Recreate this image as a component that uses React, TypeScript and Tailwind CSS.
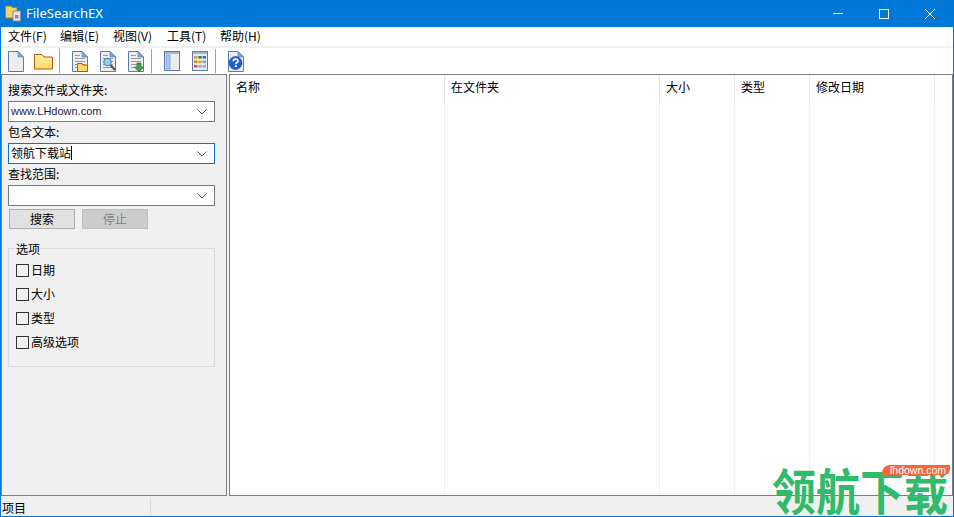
const menus = [
  { title: "文件(F)", width: "w-[39px]" },
  { title: "编辑(E)", width: "w-[40px]" },
  { title: "视图(V)", width: "w-[41px]" },
  { title: "工具(T)", width: "w-[40px]" },
  { title: "帮助(H)", width: "w-[40px]" },
];
const columns = [
  { title: "名称", width: "w-[215px]" },
  { title: "在文件夹", width: "w-[215px]" },
  { title: "大小", width: "w-[75px]" },
  { title: "类型", width: "w-[75px]" },
  { title: "修改日期", width: "w-[125px]" },
];
const options = ["日期", "大小", "类型", "高级选项"];

function DocBase({ lines = true }: { lines?: boolean }) {
  return (
    <>
      <path d="M0.5 0.5H10L15.5 6V20.5H0.5Z" fill="#ececec" stroke="#5a7cae" />
      <path d="M10 0.5V6H15.5Z" fill="#7fa6d8" stroke="#5a7cae" strokeWidth="0.6" />
      {lines && (
        <path d="M3 4.5H8M3 7.5H13M3 10.5H13M3 13.5H13M3 16.5H13" stroke="#9a9a9a" />
      )}
    </>
  );
}

function NewIcon() {
  return (
    <svg width="16" height="21" viewBox="0 0 16 21">
      <DocBase lines={false} />
    </svg>
  );
}

function FolderIcon() {
  return (
    <svg width="19" height="17" viewBox="0 0 19 17">
      <defs>
        <linearGradient id="fold" x1="0" y1="0" x2="0" y2="1">
          <stop offset="0" stopColor="#fff2a8" />
          <stop offset="1" stopColor="#fdd868" />
        </linearGradient>
      </defs>
      <path d="M0.5 16V1.5H8L10 4H18.5V16Z" fill="url(#fold)" stroke="#b8560c" />
    </svg>
  );
}

function OpenDocIcon() {
  return (
    <svg width="16" height="21" viewBox="0 0 16 21" className="overflow-visible">
      <DocBase />
      <path d="M5.5 20.5V12.5H10L11 14H15.5V20.5Z" fill="#fdd868" stroke="#b8560c" />
    </svg>
  );
}

function FindDocIcon() {
  return (
    <svg width="16" height="21" viewBox="0 0 16 21" className="overflow-visible">
      <DocBase />
      <path d="M10.5 14L15 19" stroke="#555" strokeWidth="2" />
      <circle cx="7.5" cy="11" r="3.8" fill="#8fd0f2" stroke="#4a7fb0" />
    </svg>
  );
}

function SaveDocIcon() {
  return (
    <svg width="16" height="21" viewBox="0 0 16 21" className="overflow-visible">
      <DocBase />
      <path d="M9 12H13V16H15.5L11 21L6.5 16H9Z" fill="#3fa34d" stroke="#22702e" strokeWidth="0.7" />
    </svg>
  );
}

function PaneIcon() {
  return (
    <svg width="16" height="20" viewBox="0 0 16 20">
      <rect x="0.5" y="0.5" width="15" height="19" fill="#ececec" stroke="#5a7cae" />
      <rect x="1" y="1" width="14" height="2" fill="#9db7d8" />
      <rect x="2" y="4" width="4" height="14" fill="#a9c8ec" stroke="#5a8cc8" strokeWidth="0.6" />
    </svg>
  );
}

function GridIcon() {
  const cells = [
    "#d8a23a", "#2f8f5b", "#3a6fc0",
    "#e0803a", "#d8b02a", "#8c9cc8",
    "#e0522a", "#9aa8cc", "#9aa8cc",
  ];
  return (
    <svg width="16" height="20" viewBox="0 0 16 20">
      <rect x="0.5" y="0.5" width="15" height="19" fill="#ececec" stroke="#5a7cae" />
      <rect x="1" y="1" width="14" height="2" fill="#9db7d8" />
      {cells.map((c, i) => (
        <rect key={i} x={2 + (i % 3) * 4.3} y={5 + Math.floor(i / 3) * 4.5} width="3.4" height="2.6" fill={c} />
      ))}
    </svg>
  );
}

function HelpIcon() {
  return (
    <svg width="16" height="21" viewBox="0 0 16 21">
      <DocBase lines={false} />
      <circle cx="7.5" cy="12" r="6.5" fill="#1f5fd0" stroke="#173f90" strokeWidth="0.6" />
      <path d="M5.3 10.2C5.3 8.7 6.4 8 7.6 8C9 8 10 8.8 10 10C10 11.5 7.8 11.6 7.8 13.2" fill="none" stroke="#fff" strokeWidth="1.7" />
      <rect x="6.9" y="14.2" width="1.9" height="1.9" fill="#fff" />
    </svg>
  );
}

function Sep() {
  return <div className="w-px h-6 bg-[#a0a0a0]" />;
}

function Combo({ value, focused, latin }: { value?: string; focused?: boolean; latin?: boolean }) {
  return (
    <div
      className={`h-[21px] w-[207px] ml-[3px] flex items-center justify-between bg-white border pl-[2px] pr-[7px] ${
        focused ? "border-[#0078d7]" : "border-[#7a7a7a]"
      }`}
    >
      {latin ? (
        <span className="pb-px text-[11px] text-[#1a1a4a]" style={{ fontFamily: '"Liberation Sans", sans-serif' }}>
          {value}
        </span>
      ) : (
        <span className="pb-px flex items-center text-[12px] text-black">
          {value}
          {focused && <span className="w-px h-[14px] bg-black" />}
        </span>
      )}
      <svg width="10" height="6" viewBox="0 0 10 6">
        <path d="M0.5 0.5L5 5L9.5 0.5" fill="none" stroke="#555" />
      </svg>
    </div>
  );
}

function Label({ text }: { text: string }) {
  return <div className="h-[21px] ml-[3px] pb-[2px] flex items-center text-[12px] text-black">{text}</div>;
}

export default function App() {
  return (
    <div
      className="relative w-[954px] h-[517px] overflow-hidden flex flex-col bg-[#f0f0f0] border-x border-b border-[#0078d7] text-[12px] text-black"
      style={{ fontFamily: '"Noto Sans CJK SC", "Liberation Sans", sans-serif' }}
    >
      {/* title bar */}
      <div className="h-[27px] shrink-0 -mx-px bg-[#0078d7] flex items-center text-white">
        <svg width="17" height="17" viewBox="0 0 17 17" className="ml-[5px]">
          <path d="M0.5 13V1H6L7.5 2.5H12V13Z" fill="#f5d36a" stroke="#a8801c" />
          <rect x="8" y="6" width="7.5" height="10" fill="#e6e6e6" stroke="#8a8a8a" />
          <rect x="10" y="10" width="3.5" height="3.5" fill="#8090a8" />
        </svg>
        <span className="ml-[4px] text-[13px] leading-none" style={{ fontFamily: '"Noto Sans", sans-serif' }}>
          FileSearchEX
        </span>
        <div className="ml-auto flex h-full pr-px">
          <div className="w-[46px] flex items-center justify-center">
            <div className="w-[10px] h-px bg-white" />
          </div>
          <div className="w-[46px] flex items-center justify-center">
            <div className="w-[10px] h-[10px] border border-white" />
          </div>
          <div className="w-[46px] flex items-center justify-center">
            <svg width="10" height="10" viewBox="0 0 10 10">
              <path d="M0 0L10 10M10 0L0 10" stroke="#fff" />
            </svg>
          </div>
        </div>
      </div>

      {/* menu */}
      <div className="h-[19px] shrink-0 bg-white flex items-center pl-[7px] pb-[2px] gap-[13px] text-[12px]">
        {menus.map((m) => (
          <span key={m.title} className={`${m.width} whitespace-nowrap`}>{m.title}</span>
        ))}
      </div>
      <div className="h-[2px] shrink-0 bg-[#f0f0f0]" />

      {/* toolbar */}
      <div className="h-[26px] shrink-0 bg-white flex items-center pl-[7px]">
        <NewIcon />
        <div className="ml-[10px]"><FolderIcon /></div>
        <div className="ml-[6px]"><Sep /></div>
        <div className="ml-[12px]"><OpenDocIcon /></div>
        <div className="ml-[12px]"><FindDocIcon /></div>
        <div className="ml-[12px]"><SaveDocIcon /></div>
        <div className="ml-[7px]"><Sep /></div>
        <div className="ml-[12px]"><PaneIcon /></div>
        <div className="ml-[12px]"><GridIcon /></div>
        <div className="ml-[7px]"><Sep /></div>
        <div className="ml-[12px]"><HelpIcon /></div>
      </div>

      {/* body */}
      <div className="flex-1 min-h-0 flex">
        <div className="w-[226px] shrink-0 border border-[#808080] pt-[5px] pl-[3px]">
          <Label text="搜索文件或文件夹:" />
          <Combo value="www.LHdown.com" latin />
          <Label text="包含文本:" />
          <Combo value="领航下载站" focused />
          <Label text="查找范围:" />
          <Combo />
          <div className="flex gap-[7px] mt-[3px] ml-[4px]">
            <div className="w-[66px] h-[20px] bg-[#e1e1e1] border border-[#adadad] flex items-center justify-center">搜索</div>
            <div className="w-[66px] h-[20px] bg-[#cccccc] border border-[#bfbfbf] flex items-center justify-center text-[#838383]">停止</div>
          </div>
          <div className="relative mt-[19px] ml-[3px] w-[207px] h-[119px] border border-[#dcdcdc] pt-[9px] pl-[7px]">
            <span className="absolute -top-[8px] left-[6px] px-px bg-[#f0f0f0] leading-[16px]">选项</span>
            {options.map((o) => (
              <div key={o} className="h-[24px] flex items-center gap-[2px]">
                <div className="w-[13px] h-[13px] bg-[#f0f0f0] border border-[#333333]" />
                <span>{o}</span>
              </div>
            ))}
          </div>
        </div>

        <div className="ml-[2px] flex-1 min-w-0 flex border border-[#808080] bg-white">
          {columns.map((c) => (
            <div key={c.title} className={`${c.width} shrink-0 flex flex-col border-r border-[#e8f0f8]`}>
              <div className="h-[25px] pl-[6px] pb-[2px] -mr-px flex items-center border-r border-[#e5e5e5]">{c.title}</div>
            </div>
          ))}
        </div>
      </div>

      {/* status bar */}
      <div className="h-[20px] shrink-0 pt-[2px] flex items-center bg-[#f0f0f0]">
        <div className="w-[150px] h-full pl-[1px] pt-[2px] flex items-center border-r border-[#dcdcdc]">项目</div>
      </div>

      {/* watermark */}
      <div className="absolute right-[1px] bottom-[1px] w-[180px] h-[62px] pointer-events-none">
        <span className="absolute left-0 bottom-[1px] whitespace-nowrap text-[44px] leading-[50px] font-bold scale-y-[1.12] text-[#2fbb6a]">
          领航下载
        </span>
        <span
          className="absolute right-[2px] top-[12px] w-[68px] h-[10px] pl-[8px] rounded-tl-[8px] rounded-br-[6px] bg-[#f4683c] text-white text-[10.5px] leading-[10px] whitespace-nowrap"
          style={{ fontFamily: '"Liberation Sans", sans-serif' }}
        >
          lhdown.com
        </span>
      </div>
    </div>
  );
}
